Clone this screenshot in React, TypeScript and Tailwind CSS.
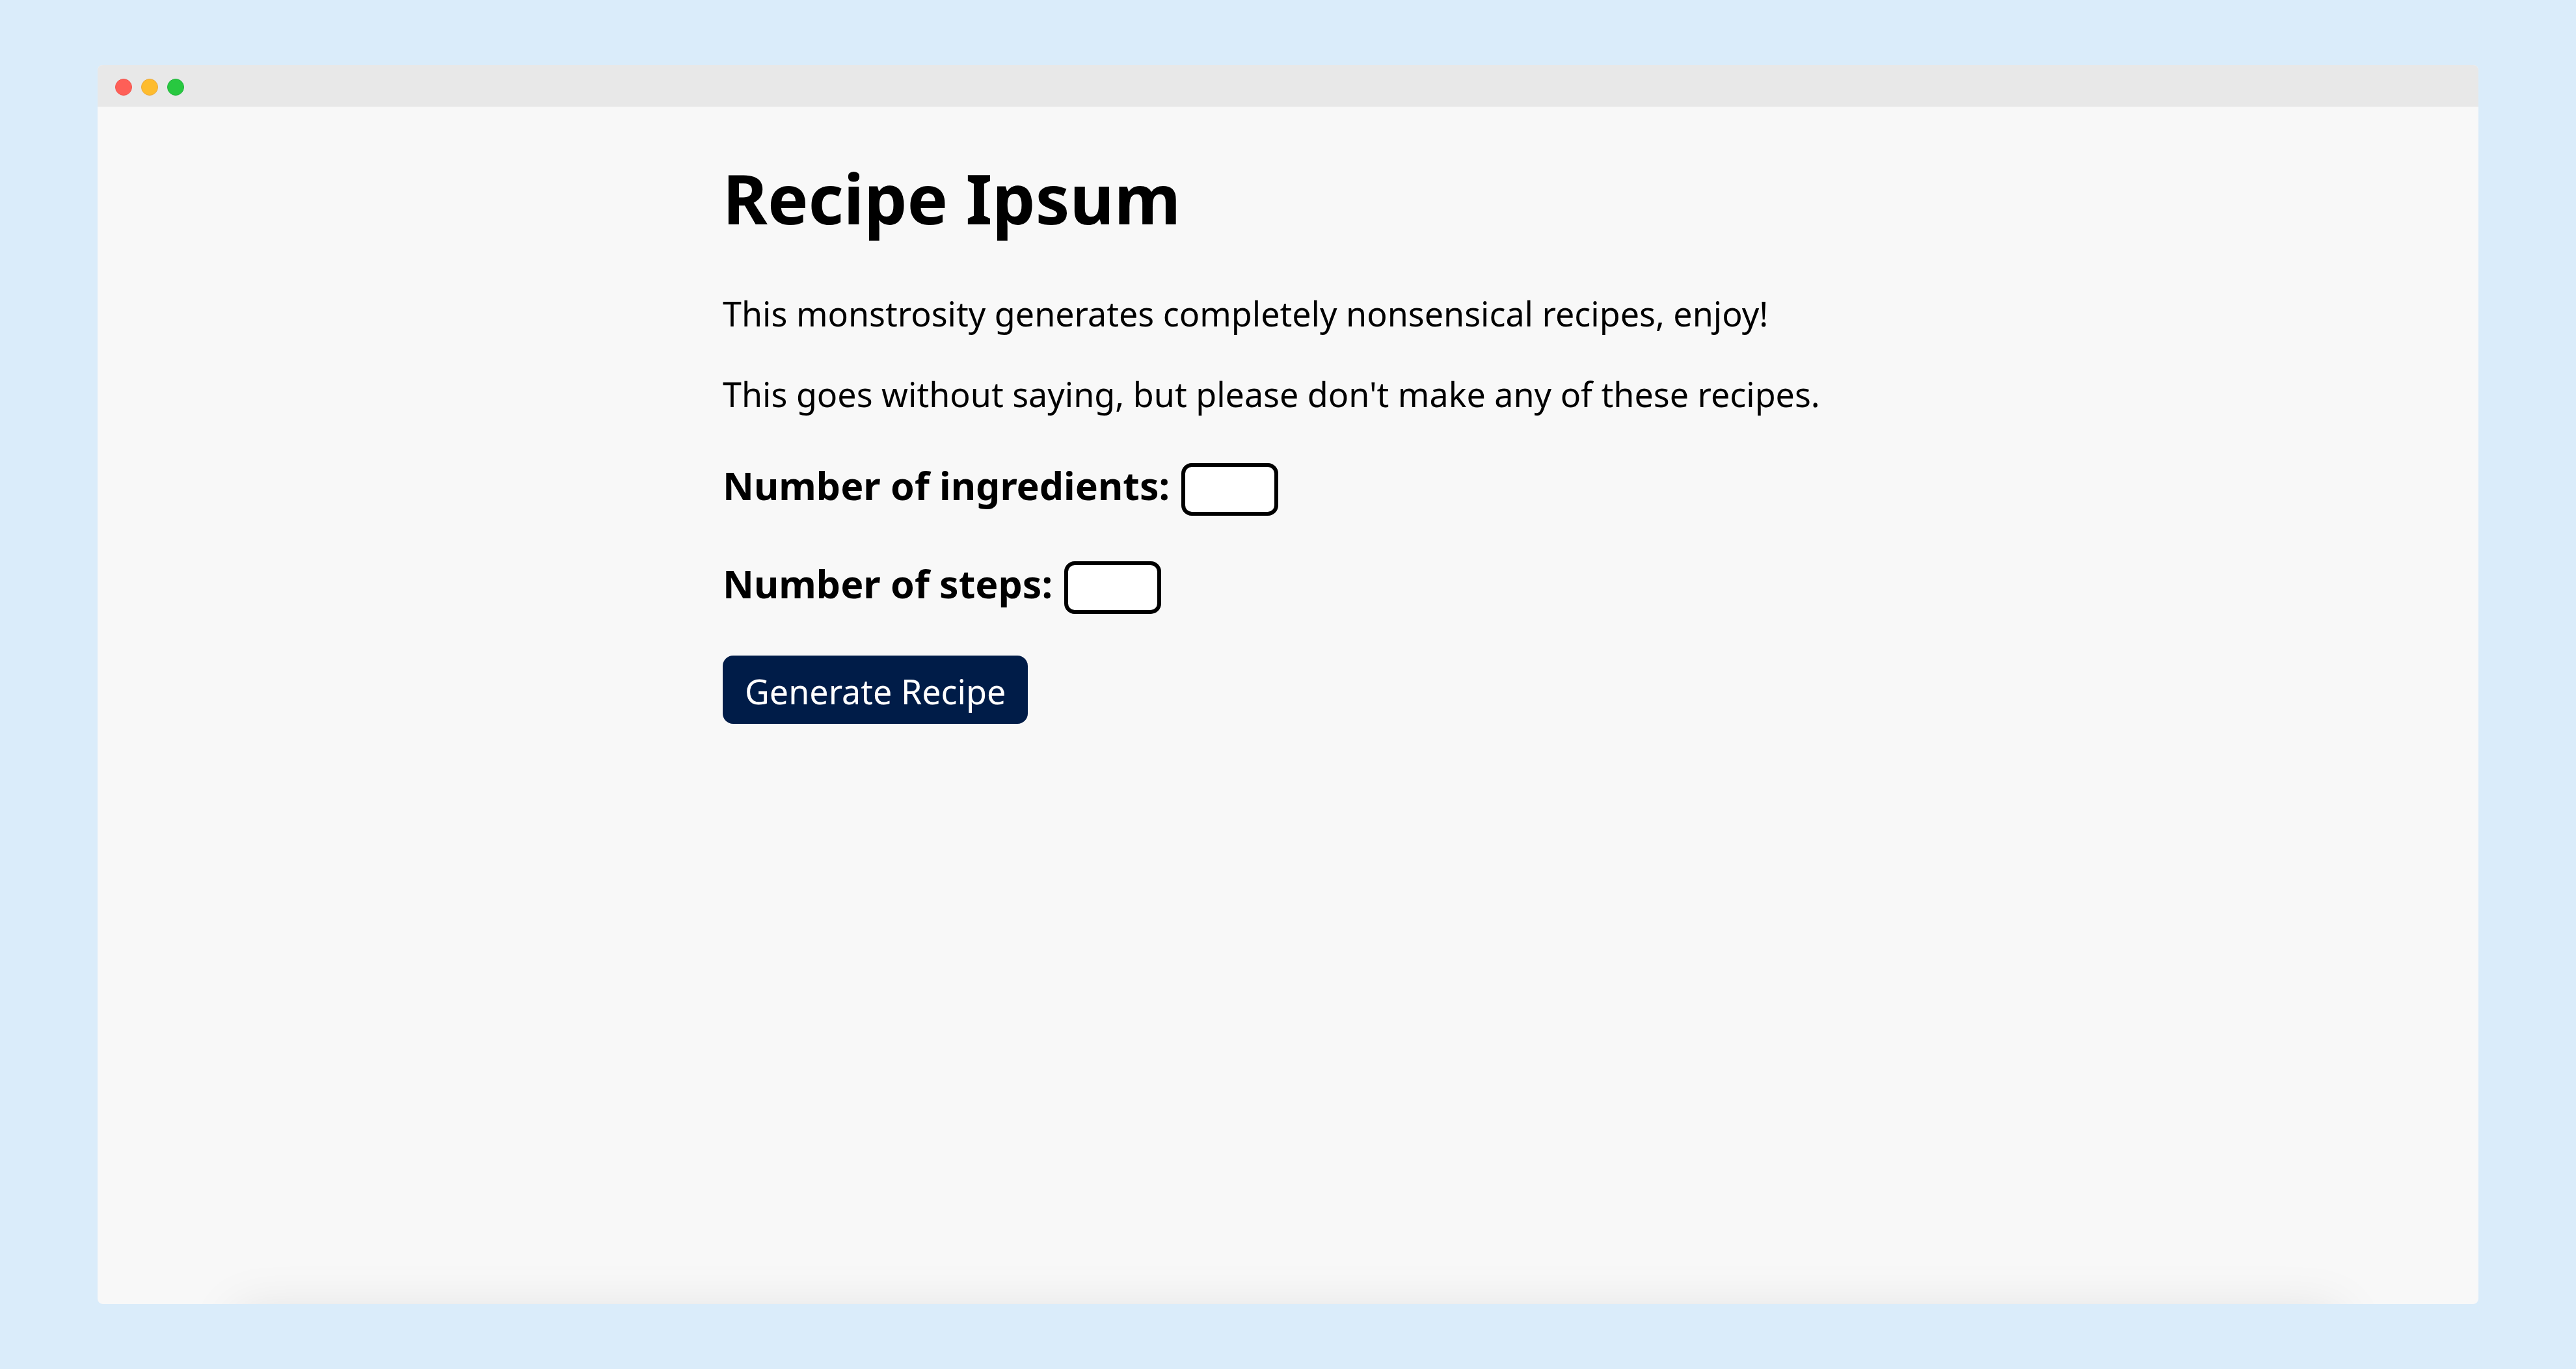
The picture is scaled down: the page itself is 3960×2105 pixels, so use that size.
export default function App() {
  return (
    <div className="flex min-h-screen bg-[#daecfa] px-[150px] py-[100px] text-black">
      <div className="relative flex grow flex-col overflow-hidden rounded-lg bg-[#f8f8f8]">
        <div className="flex h-16 shrink-0 items-center gap-[14px] bg-[#e8e8e8] px-[27px] pt-1">
          <span className="size-[26px] rounded-full border border-[#f2544d] bg-[#fe5f57]" />
          <span className="size-[26px] rounded-full border border-[#eba93c] bg-[#febc2e]" />
          <span className="size-[26px] rounded-full border border-[#1fb43c] bg-[#28c840]" />
        </div>
        <main className="mx-auto flex w-full max-w-[1738px] flex-col items-start pt-[69px] font-['Noto_Sans',sans-serif]">
          <h1 className="text-[105px] font-bold leading-[143px]">Recipe Ipsum</h1>
          <p className="mt-[70px] text-[52px] leading-[72px]">This monstrosity generates completely nonsensical recipes, enjoy!</p>
          <p className="mt-[52px] text-[52px] leading-[72px]">This goes without saying, but please don't make any of these recipes.</p>
          <div className="mt-[70px] flex items-center gap-[18px]">
            <label htmlFor="ingredients" className="pb-3 text-[59px] font-bold leading-[69px]">Number of ingredients:</label>
            <input id="ingredients" className="h-[81px] w-[149px] rounded-2xl border-[6px] border-black bg-white px-3 text-[40px]" />
          </div>
          <div className="mt-[70px] flex items-center gap-[18px]">
            <label htmlFor="steps" className="pb-3 text-[59px] font-bold leading-[69px]">Number of steps:</label>
            <input id="steps" className="h-[81px] w-[149px] rounded-2xl border-[6px] border-black bg-white px-3 text-[40px]" />
          </div>
          <button type="button" className="mt-[64px] h-[105px] rounded-2xl bg-[#001c48] px-[34px] pt-1 text-[52px] leading-[72px] text-white">Generate Recipe</button>
        </main>
        {/* Soft shade rising from the lower edge of the window */}
        <div aria-hidden="true" className="pointer-events-none absolute inset-x-[213px] -bottom-[211px] h-[200px] shadow-[0_0_80px_rgba(0,0,0,0.1)]" />
      </div>
    </div>
  );
}
